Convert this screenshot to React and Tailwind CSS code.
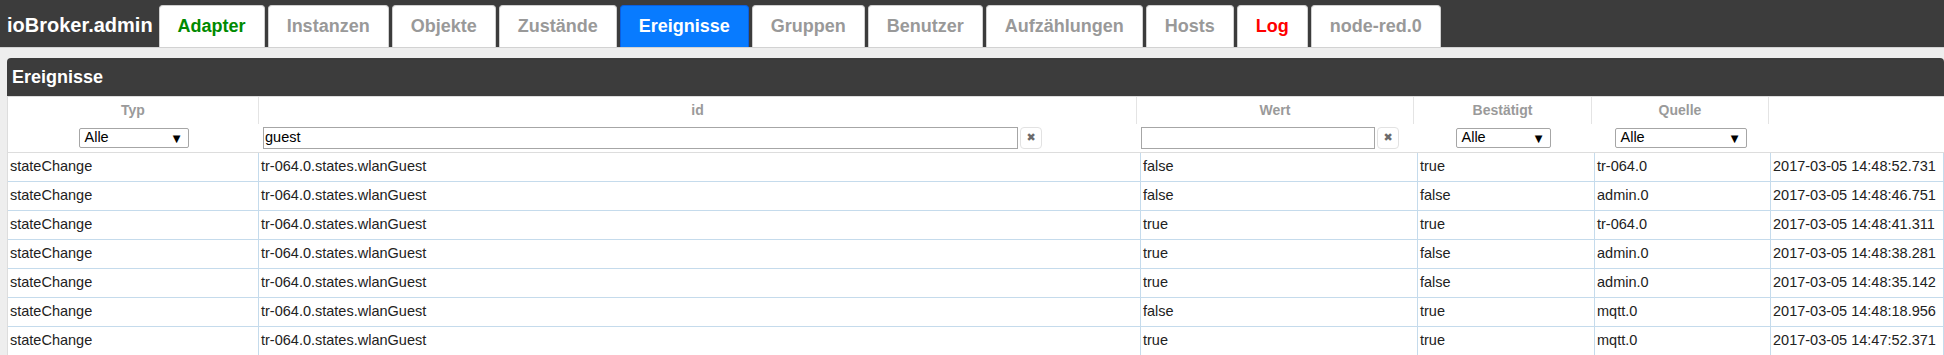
import React from "react";

const tabs = [
  { label: "Adapter", color: "text-[#008a00]" },
  { label: "Instanzen" },
  { label: "Objekte" },
  { label: "Zustände" },
  { label: "Ereignisse", active: true },
  { label: "Gruppen" },
  { label: "Benutzer" },
  { label: "Aufzählungen" },
  { label: "Hosts" },
  { label: "Log", color: "text-[#ff0000]" },
  { label: "node-red.0" },
];

const rows = [
  ["false", "true", "tr-064.0", "2017-03-05 14:48:52.731"],
  ["false", "false", "admin.0", "2017-03-05 14:48:46.751"],
  ["true", "true", "tr-064.0", "2017-03-05 14:48:41.311"],
  ["true", "false", "admin.0", "2017-03-05 14:48:38.281"],
  ["true", "false", "admin.0", "2017-03-05 14:48:35.142"],
  ["false", "true", "mqtt.0", "2017-03-05 14:48:18.956"],
  ["true", "true", "mqtt.0", "2017-03-05 14:47:52.371"],
];

const headCols = "grid grid-cols-[251px_878px_277px_178px_177px_1fr]";
const bodyCols = "grid grid-cols-[251px_882px_277px_177px_176px_1fr]";

const FakeSelect = ({ width }) => (
  <div
    className={`${width} h-[20px] bg-white border border-[#a6a6a6] rounded-[2px] flex items-center justify-between pl-[5px] pr-[7px] text-[14.5px] text-black`}
  >
    <span>Alle</span>
    <span className="text-[10px] font-['DejaVu_Sans',sans-serif]">▼</span>
  </div>
);

const ClearButton = () => (
  <div className="w-[22px] h-[22px] ml-[2px] border border-[#e2e2e2] rounded-[4px] bg-white flex items-center justify-center text-[#6b6b6b] text-[11px] font-['DejaVu_Sans',sans-serif]">
    ✖
  </div>
);

const HeadLabel = ({ children, last }) => (
  <div
    className={`h-[27px] flex items-center justify-center text-[14px] font-bold text-[#9a9a9a] ${
      last ? "" : "border-r border-[#e4e4e4]"
    }`}
  >
    {children}
  </div>
);

const Cell = ({ children }) => (
  <div className="h-[29px] flex items-center pl-[2px] border-r border-b border-[#c5dbec] whitespace-nowrap overflow-hidden">
    {children}
  </div>
);

export default function App() {
  return (
    <div className="w-[1944px] h-[355px] overflow-hidden bg-[#eeeeee] font-['Liberation_Sans',Arial,sans-serif]">
      {/* top navigation */}
      <div className="h-[48px] bg-[#3c3c3c] border-b border-[#d2d2d2] flex items-end pl-[7px]">
        <div className="self-stretch flex items-center pt-[2px] pr-[6px] text-white text-[20px] font-bold">
          ioBroker.admin
        </div>
        <div className="flex items-end gap-[3px]">
          {tabs.map((t) => (
            <div
              key={t.label}
              className={`h-[42px] px-[18px] flex items-center rounded-t-[4px] border border-b-0 text-[18px] font-bold ${
                t.active
                  ? "bg-[#087bff] border-[#0a5fe0] text-white"
                  : `bg-white border-[#d0d0d0] ${t.color || "text-[#999999]"}`
              }`}
            >
              {t.label}
            </div>
          ))}
        </div>
      </div>

      {/* panel */}
      <div className="pt-[10px] pl-[7px]">
        <div className="bg-white rounded-t-[4px] overflow-hidden">
          <div className="h-[38px] bg-[#3c3c3c] flex items-center pl-[5px] pt-[1px] text-white text-[18px] font-bold">
            Ereignisse
          </div>

          <div className="border-l border-[#dddddd] text-[14.5px] text-[#222222]">
            <div className="border-t border-[#dcdcdc]">
              <div className={headCols}>
                <HeadLabel>Typ</HeadLabel>
                <HeadLabel>id</HeadLabel>
                <HeadLabel>Wert</HeadLabel>
                <HeadLabel>Bestätigt</HeadLabel>
                <HeadLabel>Quelle</HeadLabel>
                <HeadLabel last />
              </div>
              <div className={`${headCols} h-[28px] items-center`}>
                <div className="flex justify-center">
                  <FakeSelect width="w-[110px]" />
                </div>
                <div className="flex items-center pl-[4px]">
                  <div className="w-[755px] h-[22px] border border-[#a6a6a6] flex items-center pl-[1px] text-black">
                    guest
                  </div>
                  <ClearButton />
                </div>
                <div className="flex items-center pl-[4px]">
                  <div className="w-[234px] h-[22px] border border-[#a6a6a6]" />
                  <ClearButton />
                </div>
                <div className="flex justify-center">
                  <FakeSelect width="w-[95px]" />
                </div>
                <div className="flex justify-center">
                  <FakeSelect width="w-[132px]" />
                </div>
                <div />
              </div>
            </div>

            <div className="border-t border-[#dddddd]">
              {rows.map((r, i) => (
                <div key={i} className={bodyCols}>
                  <Cell>stateChange</Cell>
                  <Cell>tr-064.0.states.wlanGuest</Cell>
                  <Cell>{r[0]}</Cell>
                  <Cell>{r[1]}</Cell>
                  <Cell>{r[2]}</Cell>
                  <Cell>{r[3]}</Cell>
                </div>
              ))}
            </div>
          </div>
        </div>
      </div>
    </div>
  );
}
